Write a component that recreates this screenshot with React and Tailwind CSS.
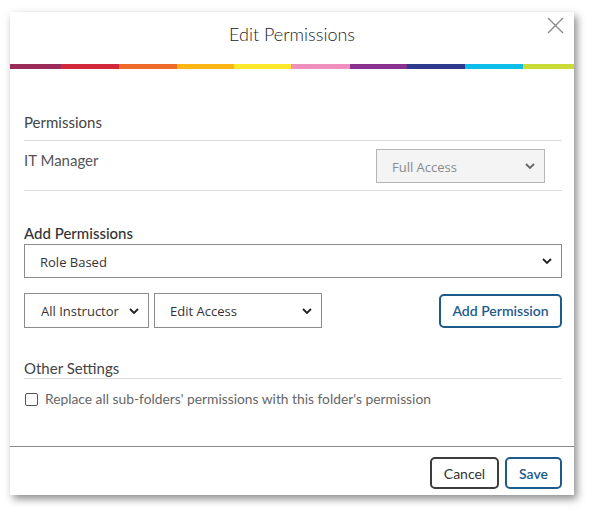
import React, { useState } from "react";

const stripes = [
  ["w-[51px]", "bg-[#9b2c5a]"],
  ["w-[58px]", "bg-[#d2283c]"],
  ["w-[58px]", "bg-[#f06a2a]"],
  ["w-[57px]", "bg-[#fbb615]"],
  ["w-[57px]", "bg-[#fde92c]"],
  ["w-[59px]", "bg-[#ef8fbd]"],
  ["w-[57px]", "bg-[#8a3190]"],
  ["w-[58px]", "bg-[#2f3a8f]"],
  ["w-[58px]", "bg-[#0dbfe8]"],
  ["w-[51px]", "bg-[#cbdb36]"],
];

function Chevron({ color = "#333" }) {
  return (
    <svg width="10" height="6" viewBox="0 0 10 6" className="shrink-0">
      <path d="M1 1l4 4 4-4" fill="none" stroke={color} strokeWidth="1.8" />
    </svg>
  );
}

/* fake select box, native arrow looks different in every browser */
function SelectBox({ value, className = "", disabled = false }) {
  return (
    <div
      className={
        "flex items-center justify-between border pl-[15px] pr-[9px] text-[13px] " +
        (disabled
          ? "border-[#b5b5b5] bg-[#f4f4f4] text-[#8a8a8a] "
          : "border-[#8c8c8c] bg-white text-[#333] ") +
        className
      }
      style={{ fontFamily: "'Open Sans', 'Liberation Sans', sans-serif" }}
    >
      <span className="whitespace-nowrap pt-[3px]">{value}</span>
      <Chevron color={disabled ? "#666" : "#222"} />
    </div>
  );
}

export default function App() {
  const [replaceAll, setReplaceAll] = useState(false);

  return (
    <div
      className="w-[593px] h-[514px] bg-white pt-[12px] pl-[10px]"
      style={{ fontFamily: "Lato, 'Noto Sans', sans-serif" }}
    >
      <div className="relative w-[564px] h-[483px] bg-white flex flex-col shadow-[3px_4px_8px_rgba(0,0,0,0.45)]">
        {/* =========================
            HEADER
        ========================= */}
        <div className="h-[53px] flex items-center justify-center">
          <h2 className="text-[18px] font-light text-[#222] mt-[-8px]">Edit Permissions</h2>
        </div>
        <button className="absolute right-[10px] top-[5px] p-0">
          <svg width="17" height="17" viewBox="0 0 17 17">
            <path d="M1 1l15 15M16 1L1 16" stroke="#8a8a8a" strokeWidth="1.4" />
          </svg>
        </button>

        <div className="flex h-[5px] mt-[-1px]">
          {stripes.map(([w, bg], i) => (
            <div key={i} className={w + " h-full " + bg} />
          ))}
        </div>

        {/* =========================
            BODY
        ========================= */}
        <div className="flex-1 pl-[14px] pr-[12px]">
          <div className="mt-[43px] text-[15px] text-[#444] leading-[20px]">Permissions</div>
          <div className="mt-[8px] border-t border-[#dcdcdc]" />
          <div className="flex justify-between h-[49px] pt-[8px]">
            <span className="text-[15px] text-[#555] leading-[20px] mt-[1px]">IT Manager</span>
            <SelectBox
              value="Full Access"
              disabled
              className="w-[169px] h-[34px] mr-[17px]"
            />
          </div>
          <div className="border-t border-[#dcdcdc]" />

          <div className="mt-[32px] text-[15px] font-medium text-[#333] leading-[20px]">
            Add Permissions
          </div>
          <SelectBox value="Role Based" className="mt-[1px] w-full h-[34px]" />

          <div className="mt-[15px] flex items-center">
            <SelectBox value="All Instructor" className="w-[125px] h-[35px] pl-[16px]" />
            <SelectBox value="Edit Access" className="ml-[5px] w-[168px] h-[35px]" />
            <button className="ml-auto w-[123px] h-[34px] rounded-[5px] border-2 border-[#1d5b8c] text-[14px] font-semibold text-[#1d5b8c]">
              Add Permission
            </button>
          </div>

          <div className="mt-[30px] text-[15px] text-[#444] leading-[20px]">Other Settings</div>
          <div className="mt-[0px] border-t border-[#dcdcdc]" />
          <label className="mt-[11px] flex items-center gap-[7px] cursor-pointer">
            <input
              type="checkbox"
              checked={replaceAll}
              onChange={(e) => setReplaceAll(e.target.checked)}
              className="appearance-none w-[13px] h-[13px] ml-[1px] border border-[#555] rounded-[2px] bg-white"
            />
            <span className="text-[13.8px] text-[#666] leading-[18px]">
              Replace all sub-folders' permissions with this folder's permission
            </span>
          </label>
        </div>

        {/* =========================
            FOOTER
        ========================= */}
        <div className="h-[49px] border-t border-[#8a8a8a] flex justify-end items-start pt-[10px] pr-[12px] gap-[6px]">
          <button className="w-[69px] h-[32px] rounded-[5px] border-2 border-[#3c3c3c] text-[14px] text-[#333]">
            Cancel
          </button>
          <button className="w-[57px] h-[32px] rounded-[5px] border-2 border-[#1d5b8c] text-[14px] font-semibold text-[#1d5b8c]">
            Save
          </button>
        </div>
      </div>
    </div>
  );
}
